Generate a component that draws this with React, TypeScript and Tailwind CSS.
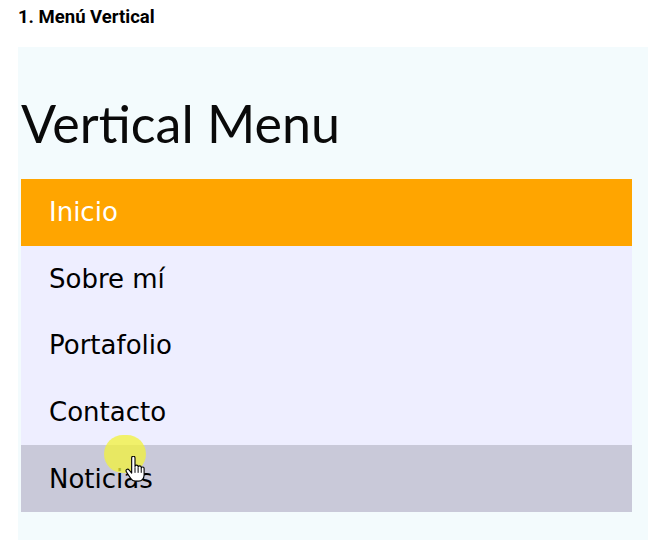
const items = ['Inicio', 'Sobre mí', 'Portafolio', 'Contacto', 'Noticias'];

function HandCursor() {
  return (
    <svg width="20" height="27" viewBox="0 0 18 24" className="block">
      <path
        d="M6 1.6c0-.9.7-1.6 1.5-1.6S9 .7 9 1.6V9.4c0-.8.6-1.3 1.4-1.3s1.4.5 1.4 1.3v.6c0-.8.6-1.3 1.4-1.3s1.4.5 1.4 1.3v1c0-.7.6-1.2 1.3-1.2s1.3.5 1.3 1.2V17c0 3-2 5.5-5 5.5H9.3c-2 0-3.2-1-4.2-2.5L1.2 14c-.5-.8-.3-1.7.4-2.1.7-.4 1.5-.2 2 .5L6 15.2Z"
        fill="#fff"
        stroke="#000"
        strokeWidth="1"
        strokeLinejoin="round"
      />
      <path d="M9 10v5M11.8 10.5v4.5M14.6 11.5v3.5" stroke="#000" strokeWidth="0.9" />
    </svg>
  );
}

export default function App() {
  return (
    <div className="w-[648px] h-[540px] bg-white overflow-hidden">
      <div className="pl-[18px] pt-[6px]">
        <p className="text-[18.5px] font-bold text-black leading-[22px] font-['Roboto',sans-serif]">
          1. Menú Vertical
        </p>
      </div>
      <div className="ml-[18px] mt-[19px] bg-[#f3fbfd] pl-[3px] pr-[16px] pt-[50px] pb-[30px]">
        <h1 className="text-[52px] leading-none text-[#0a0a0a] font-['Lato',sans-serif] mb-[30px]">
          Vertical Menu
        </h1>
        <ul className="bg-[#eeeeff]">
          {items.map((item, i) => (
            <li
              key={item}
              className={
                i === 0
                  ? 'h-[66.6px] flex items-center pl-[28px] bg-[#ffa500] text-white'
                  : i === 4
                  ? 'relative h-[66.6px] flex items-center pl-[28px] bg-[#c9c9d9] text-black'
                  : 'h-[66.6px] flex items-center pl-[28px] text-black'
              }
            >
              <span className="text-[26px] leading-[30px] font-['DejaVu_Sans',sans-serif]">{item}</span>
              {i === 4 && (
                <>
                  <div className="absolute left-[83px] top-[-10px] w-[42px] h-[38px] rounded-full bg-[#f2f23a]/75" />
                  <div className="absolute left-[104px] top-[11px]">
                    <HandCursor />
                  </div>
                </>
              )}
            </li>
          ))}
        </ul>
      </div>
    </div>
  );
}
